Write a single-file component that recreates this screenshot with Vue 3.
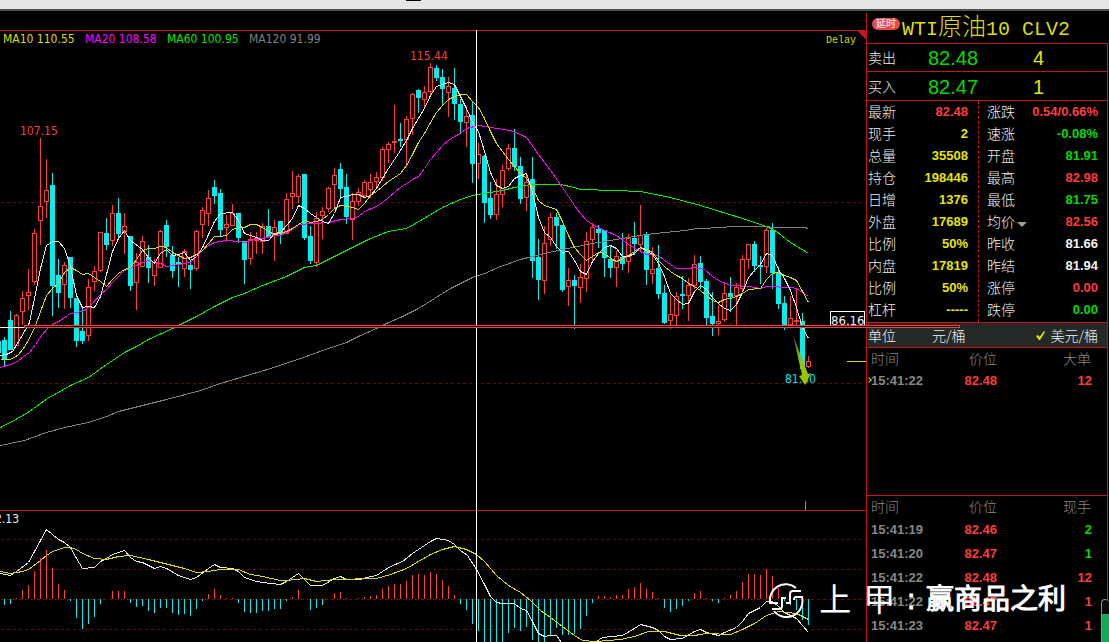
<script setup>
// [centre x, direction (u = up, d = down), high, body top, body bottom, low]
const candles = [
  [-2,'d',341,341,353,353],[4,'d',337,340,360,366],[10,'d',311,320,350,350],[16,'u',314,315,346,346],[22,'u',291,298,312,325],
  [28,'u',269,292,296,310],[34,'u',229,233,282,285],[40,'u',138,206,221,245],[46,'u',159,190,202,218],[52,'d',173,185,286,316],
  [58,'d',259,275,293,308],[64,'u',262,265,285,309],[70,'d',257,257,298,308],[76,'d',298,298,341,347],[82,'d',306,331,341,344],
  [88,'u',279,287,336,341],[94,'u',266,271,282,291],[100,'u',232,232,271,272],[106,'d',218,233,245,250],[112,'u',205,213,241,246],
  [118,'d',198,213,234,239],[124,'u',213,226,232,254],[130,'d',236,236,286,291],[136,'u',253,262,283,310],[142,'u',236,241,267,267],
  [148,'d',245,257,268,283],[154,'u',259,262,276,286],[160,'u',230,231,268,268],[166,'d',220,225,247,257],[172,'d',246,255,271,278],
  [178,'d',257,262,265,287],[184,'u',249,251,269,277],[190,'d',261,265,270,289],[196,'u',230,231,269,271],[202,'u',207,210,225,238],
  [208,'u',190,198,214,226],[214,'d',180,187,196,204],[220,'d',189,193,230,236],[226,'u',215,224,228,242],[232,'u',204,213,226,226],
  [238,'d',213,213,238,243],[244,'d',241,241,260,284],[250,'u',232,239,259,265],[256,'u',232,238,241,254],[262,'u',223,226,242,254],
  [268,'d',209,226,237,238],[274,'u',220,227,236,261],[280,'d',221,221,234,244],[286,'u',193,199,234,234],[292,'u',171,193,197,209],
  [298,'u',174,176,197,203],[304,'d',174,174,238,240],[310,'d',226,236,261,264],[316,'u',212,218,263,267],[322,'u',207,211,216,239],
  [328,'u',187,188,209,212],[334,'u',168,175,185,208],[340,'d',163,169,189,197],[346,'d',174,187,217,224],[352,'u',193,201,220,240],
  [358,'u',188,192,202,206],[364,'u',180,182,196,198],[370,'u',174,182,190,198],[376,'u',172,177,182,187],[382,'u',147,149,178,181],
  [388,'u',142,144,150,163],[394,'u',105,141,143,153],[400,'d',123,139,141,147],[406,'u',116,119,140,167],[412,'u',93,94,119,135],
  [418,'d',89,90,98,113],[424,'u',86,92,100,108],[430,'u',63,67,92,95],[436,'d',65,68,78,81],[442,'d',69,77,89,106],
  [448,'u',77,86,93,117],[454,'d',68,88,104,120],[460,'d',99,104,122,133],[466,'u',106,116,123,147],[472,'d',101,115,164,183],
  [478,'u',143,154,164,179],[484,'d',155,156,203,223],[490,'d',182,198,215,219],[496,'u',179,194,215,220],[502,'u',165,170,195,207],
  [508,'u',144,148,169,171],[514,'d',129,148,167,171],[520,'d',157,166,199,204],[526,'u',175,182,198,211],[532,'d',157,179,261,278],
  [538,'d',239,257,280,300],[544,'u',226,243,281,294],[550,'u',213,217,240,246],[556,'d',213,217,226,249],[562,'d',225,225,290,292],
  [568,'u',268,280,287,306],[574,'d',275,280,286,329],[580,'u',264,277,288,303],[586,'u',232,241,279,292],[592,'u',223,227,240,262],
  [598,'d',225,229,233,248],[604,'d',230,230,258,277],[610,'d',245,259,268,278],[616,'u',251,256,268,287],[622,'d',233,257,264,270],
  [628,'u',234,238,262,273],[634,'d',222,238,244,255],[640,'u',205,235,245,251],[646,'d',232,234,270,285],[652,'u',247,269,274,284],
  [658,'d',245,268,294,299],[664,'d',285,293,323,324],[670,'u',295,314,321,329],[676,'u',292,296,316,327],[682,'d',276,294,296,309],
  [688,'u',278,285,296,321],[694,'u',255,264,286,289],[700,'d',256,263,282,289],[706,'d',279,281,318,327],[712,'d',292,316,324,336],
  [718,'u',305,321,324,335],[724,'u',283,293,320,322],[730,'d',277,293,297,312],[736,'u',283,287,296,327],[742,'u',255,259,289,292],
  [748,'u',244,244,260,269],[754,'d',241,244,266,272],[760,'d',256,265,267,284],[766,'u',228,230,267,273],[772,'d',223,230,273,289],
  [778,'d',267,273,304,309],[784,'d',296,303,327,330],[790,'u',296,318,325,327],[796,'u',288,320,322,328],[802,'d',313,321,369,369],
  [808,'u',356,361,367,368]
]

const averages = [
  { cls: 'gray', points: '0,445 24,440 46,432 64,427 88,422 106,416 118,411 142,405 166,399 200,390 220,383 240,377 270,368 300,358 325,349 346,342 360,335 376,328 388,322 400,317 418,308 434,298 450,288 472,277 484,273 500,266 520,259 544,253 562,249 592,243 610,240 628,237 646,234 664,232 685,230 697,228 724,227 730,226 764,226 774,227 804,227 808,228' },
  { cls: 'green', points: '0,427 17,418 29,411 47,398 70,385 88,377 106,364 124,352 136,346 148,339 172,328 196,316 214,306 232,297 244,293 262,285 286,276 304,267 316,265 334,256 352,247 370,238 388,231 406,228 422,219 442,207 460,199 472,195 484,193 502,190 514,187 530,184 560,184 574,187 580,189 614,190 640,191 650,193 670,197 700,205 742,218 766,226 776,231 790,242 808,253' },
  { cls: 'magenta', points: '0,367 10,364 17,361 23,356 29,352 35,344 41,335 47,328 52,324 60,320 70,313 82,311 90,305 100,294 106,289 112,282 118,276 124,270 130,267 136,265 142,262 148,260 154,262 160,263 166,266 172,265 190,262 196,256 202,250 208,245 214,242 226,240 238,241 244,242 250,240 262,238 274,235 280,235 292,229 298,224 328,222 340,219 352,218 358,216 364,211 376,206 382,202 388,197 400,187 412,179 418,176 424,168 430,159 442,145 448,140 454,136 460,133 466,128 478,125 490,127 510,130 520,134 526,137 538,154 550,170 562,187 574,205 580,213 586,220 592,224 604,230 616,235 628,244 640,251 646,254 658,255 664,260 676,268 688,268 694,267 704,269 712,276 718,280 730,285 748,286 760,288 766,286 790,287 796,288 802,292 808,296' },
  { cls: 'yellow', points: '0,359 10,359 17,355 23,348 29,338 35,325 40,311 46,295 52,288 58,283 64,272 70,267 76,270 82,274 88,273 94,277 100,281 106,286 112,279 118,273 124,269 130,267 136,259 142,250 148,248 154,248 160,246 166,247 172,252 178,255 184,258 190,257 196,254 202,250 208,243 214,236 220,236 226,235 232,229 238,227 244,227 250,224 256,224 262,227 268,231 274,234 280,233 286,231 292,228 298,224 304,220 310,222 316,221 322,219 328,214 334,208 340,205 346,206 352,207 358,209 364,203 370,195 376,191 382,186 388,181 394,177 400,173 406,165 412,154 418,142 424,133 430,122 436,112 442,105 448,99 454,96 460,94 466,94 472,101 478,107 484,118 490,131 496,143 502,151 508,159 514,166 520,173 526,178 532,187 538,200 544,205 550,207 556,209 562,221 568,235 574,247 580,254 586,260 592,256 598,252 604,253 610,258 616,261 622,258 628,255 634,251 640,247 646,249 652,252 658,260 664,266 670,271 676,275 682,278 688,283 694,286 700,290 706,295 712,300 718,302 724,299 730,298 736,296 742,293 748,289 760,288 766,279 772,273 778,272 784,275 790,277 796,280 802,291 808,302' },
  { cls: 'white', points: '0,355 6,354 12,351 17,343 24,331 29,322 35,293 40,268 46,245 52,241 58,241 64,248 70,266 76,295 82,307 88,306 94,307 100,296 106,274 112,251 118,238 124,230 130,240 142,249 148,257 154,263 160,253 166,249 172,255 178,254 184,252 190,260 196,256 202,247 208,234 214,221 220,213 232,212 238,220 244,233 256,237 262,240 268,240 274,233 280,232 286,225 292,218 298,205 304,208 310,213 316,217 322,221 328,223 334,213 340,197 346,196 352,194 358,194 364,197 370,195 376,188 382,178 388,168 394,159 400,150 406,140 412,128 418,118 424,108 430,95 436,86 442,84 448,82 454,84 460,96 466,108 472,122 478,131 484,151 490,172 496,185 502,188 508,186 514,178 520,175 526,173 532,192 538,217 544,232 550,237 556,246 562,252 568,251 574,260 580,271 586,274 592,261 598,253 604,247 610,245 616,248 622,256 628,256 634,253 640,247 646,250 652,254 658,263 664,276 670,293 676,299 682,304 688,303 694,291 700,285 706,289 712,297 718,303 724,308 730,310 736,304 742,292 748,277 754,270 760,264 766,253 772,255 778,269 784,278 790,290 796,307 802,327 808,338' }
]

const macd = [
  { cls: 'white', points: '0,573 10,575 16,571 28,562 34,551 40,540 46,529 52,534 58,539 64,542 70,547 76,558 82,568 94,567 100,561 106,558 112,554 118,552 124,550 130,557 136,561 142,562 154,568 160,566 166,568 178,575 184,577 190,579 196,577 208,568 214,564 220,567 232,568 238,571 244,577 256,581 270,583 280,584 286,581 298,573 304,579 310,585 322,585 334,578 340,576 346,579 360,579 366,577 376,575 382,571 390,566 402,561 412,553 418,549 424,545 430,541 436,538 448,540 454,544 460,550 467,555 476,569 484,584 490,596 496,602 502,603 514,603 520,608 526,610 532,621 538,633 544,636 550,635 556,635 561,642 580,652 596,641 602,637 622,635 634,628 640,624 652,627 658,630 664,636 670,639 682,638 694,631 700,629 706,632 718,635 724,632 736,627 742,621 748,613 754,610 760,607 766,601 772,601 778,606 784,612 796,618 802,625 808,632' },
  { cls: 'yellow', points: '0,571 10,573 22,571 28,569 40,560 46,555 52,551 64,547 70,547 76,549 82,553 94,558 106,559 118,556 130,555 148,559 160,562 172,565 184,568 196,572 208,571 220,569 238,569 250,574 262,576 280,580 286,580 304,578 316,581 334,579 376,578 390,574 406,568 418,561 430,554 442,549 454,546 466,549 476,554 484,561 496,575 508,585 520,592 530,600 540,610 550,617 562,626 574,635 582,640 595,641 620,639 634,636 648,631 664,631 680,635 694,635 706,633 730,634 742,629 754,623 766,615 778,611 796,613 808,619' }
]

const zero = 599
// One bar every 6 px from x = 4; each value is the bar's end
const ends = [
  605,604,598,590,585,571,558,550,568,584,590,601,618,629,624,617,604,599,591,591,591,603,607,606,611,613,608,608,613,615,
  614,616,609,601,594,589,595,598,598,603,612,613,613,611,611,609,609,601,597,590,599,610,608,605,599,593,592,598,599,598,
  597,596,595,589,586,584,584,581,575,574,575,572,574,580,586,595,604,610,624,631,642,642,642,642,633,628,631,627,640,642,
  642,635,628,635,635,634,629,616,603,596,596,597,595,595,589,587,583,589,592,598,608,612,609,606,601,593,591,598,601,603,
  598,595,591,582,574,574,575,569,576,588,601,605,610,620,625
]
const bars = ends.map((end, i) => ({
  x: 4 + i * 6,
  y: Math.min(end, zero),
  h: Math.abs(end - zero),
  cls: end < zero ? 'up' : 'down'
}))

const legend = [
  { x: 3, text: 'MA10 110.55', cls: 'yellow' },
  { x: 85, text: 'MA20 108.58', cls: 'magenta' },
  { x: 167, text: 'MA60 100.95', cls: 'green' },
  { x: 249, text: 'MA120 91.99', cls: 'gray' }
]

const orders = [
  { label: '卖出', price: '82.48', count: '4' },
  { label: '买入', price: '82.47', count: '1' }
]

const leftStats = [
  ['最新', '82.48', 'r'], ['现手', '2', 'y'], ['总量', '35508', 'y'], ['持仓', '198446', 'y'], ['日增', '1376', 'y'],
  ['外盘', '17689', 'y'], ['比例', '50%', 'y'], ['内盘', '17819', 'y'], ['比例', '50%', 'y'], ['杠杆', '-----', 'y']
]
const rightStats = [
  ['涨跌', '0.54/0.66%', 'r'], ['速涨', '-0.08%', 'g'], ['开盘', '81.91', 'g'], ['最高', '82.98', 'r'], ['最低', '81.75', 'g'],
  ['均价', '82.56', 'r'], ['昨收', '81.66', 'w'], ['昨结', '81.94', 'w'], ['涨停', '0.00', 'r'], ['跌停', '0.00', 'g']
]

const trades = [
  ['15:41:19', '82.46', '2', 'g'],
  ['15:41:20', '82.47', '1', 'g'],
  ['15:41:22', '82.48', '12', 'r'],
  ['15:41:22', '82.47', '1', 'r'],
  ['15:41:23', '82.47', '1', 'r']
]
</script>

<template>
  <div class="app">
    <header class="topbar"><span class="mark"></span></header>
    <main class="main">
      <section class="chart">
        <svg class="plot" viewBox="0 11 866 631" role="img" aria-label="WTI原油10">
          <defs>
            <linearGradient id="tail" x1="0" y1="0" x2="0" y2="1">
              <stop offset="0" stop-color="#4c5c10" />
              <stop offset="0.5" stop-color="#98c400" />
            </linearGradient>
          </defs>

          <g class="crisp">
            <path class="grid" d="M1 202.5H866M1 383.5H866M1 539.5H866M1 569.5H866M1 599.5H866M1 629.5H866" />
            <path class="frame" d="M0 30.5H866M0 510.5H866" />
            <path d="M857 30H866V40Z" fill="#c81414" />
          </g>

          <g class="crisp">
            <g v-for="c in candles" :key="c[0]" :class="c[1] === 'u' ? 'rise' : 'fall'">
              <template v-if="c[1] === 'u'">
                <rect class="wick" :x="c[0]" :y="c[2]" width="1" :height="c[3] - c[2]" />
                <rect class="wick" :x="c[0]" :y="c[4]" width="1" :height="c[5] - c[4]" />
                <rect class="hollow" :x="c[0] - 1.5" :y="c[3] + 0.5" width="4" :height="c[4] - c[3] - 1" />
              </template>
              <template v-else>
                <rect class="wick" :x="c[0]" :y="c[2]" width="1" :height="c[5] - c[2]" />
                <rect class="wick" :x="c[0] - 2" :y="c[3]" width="5" :height="c[4] - c[3]" />
              </template>
            </g>
            <rect v-for="b in bars" :key="b.x" :class="b.cls" :x="b.x" :y="b.y" width="1" :height="b.h" />
          </g>

          <g class="crisp lines" transform="translate(0.5 0.5)">
            <polyline v-for="a in averages" :key="a.cls" :class="a.cls" :points="a.points" />
            <polyline v-for="m in macd" :key="m.cls" :class="m.cls" :points="m.points" />
          </g>

          <g class="crisp">
            <path d="M476.5 30V642M0 327.5H866" stroke="#fff" fill="none" />
            <path d="M847 361.5H866" stroke="#e0e000" />
            <path d="M805.5 501V510" stroke="#909090" />
            <rect x="830.5" y="311.5" width="34" height="16" fill="#000" stroke="#fff" />
          </g>

          <g class="t12">
            <text v-for="l in legend" :key="l.x" :class="l.cls" :x="l.x" y="43">{{ l.text }}</text>
            <text class="redtext" x="20" y="135">107.15</text>
            <text class="redtext" x="410" y="60">115.44</text>
            <text class="cyan" x="785" y="383">81.50</text>
            <text class="white" x="19" y="523" text-anchor="end">2.13</text>
          </g>
          <text class="t13 white" x="831" y="325">86.16</text>
          <text class="delay" x="826" y="43">Delay</text>
          <path d="M793 335L804 364L808 374L811 373L805 385L799 376L802 375Z" fill="url(#tail)" />
        </svg>
      </section>

      <aside class="panel">
        <h1 class="title">
          <span class="badge">延时</span>
          <span class="name">WTI<span class="han">原油</span>10 CLV2</span>
        </h1>
        <div class="box">
          <div v-for="o in orders" :key="o.label" class="order">
            <span>{{ o.label }}</span>
            <span class="price">{{ o.price }}</span>
            <span class="count">{{ o.count }}</span>
          </div>

          <div class="stats">
            <dl class="col left">
              <div v-for="(s, i) in leftStats" :key="i" class="stat">
                <dt>{{ s[0] }}</dt>
                <dd :class="s[2]">{{ s[1] }}</dd>
              </div>
            </dl>
            <dl class="col right">
              <div v-for="(s, i) in rightStats" :key="i" class="stat">
                <dt>
                  <button v-if="s[0] === '均价'" class="pick" type="button">{{ s[0] }}<i class="caret"></i></button>
                  <template v-else>{{ s[0] }}</template>
                </dt>
                <dd :class="s[2]">{{ s[1] }}</dd>
              </div>
            </dl>
          </div>

          <div class="units">
            <span>单位</span>
            <button class="unit first" type="button">元/桶</button>
            <button class="unit" type="button">
              <svg class="tick" viewBox="0 0 9 9"><path d="M0 5L2 4L3.500 6L8 0L9 1L4 9H3Z" fill="#e6e600" /></svg>美元/桶
            </button>
          </div>

          <table class="trades big">
            <thead><tr><th>时间</th><th>价位</th><th>大单</th></tr></thead>
            <tbody>
              <tr><td class="now">15:41:22</td><td class="r">82.48</td><td class="r">12</td></tr>
            </tbody>
          </table>

          <table class="trades ticks">
            <thead><tr><th>时间</th><th>价位</th><th>现手</th></tr></thead>
            <tbody>
              <tr v-for="(t, i) in trades" :key="i"><td>{{ t[0] }}</td><td class="r">{{ t[1] }}</td><td :class="t[3]">{{ t[2] }}</td></tr>
            </tbody>
          </table>
        </div>
      </aside>

      <div class="marker"></div>
      <div class="scroll"></div>
      <div class="watermark">
        <svg class="logo" viewBox="0 0 36 36">
          <g fill="none" stroke="#fff" stroke-width="2">
            <path d="M28 6A16 16 0 0 0 2 21H10" />
            <path d="M6 29A16 16 0 0 0 34 15H28Q26 15 26 18" />
            <path d="M33 9H25Q22 9 22 12V21H18" />
            <path d="M4 27H11Q14 27 14 24V16H18" />
          </g>
        </svg>
        <span class="brand">上</span><span class="brand">甲</span><span class="tag">:</span><span class="tag">赢商品之利</span>
      </div>
    </main>
  </div>
</template>

<style>
body {
  background: #000;
}
</style>

<style scoped>
.app {
  display: flex;
  flex-direction: column;
  min-height: 100vh;
  background: #000;
  color: #f0f0f0;
  font: 300 14px/22px "Liberation Sans", "Noto Sans CJK SC", sans-serif;
}
.topbar {
  height: 9px;
  background: #e6e6e6;
  border-bottom: 2px solid #505252;
}
.mark {
  display: block;
  width: 15px;
  height: 1px;
  margin-left: 406px;
  background: #000;
}
.main {
  position: relative;
  flex: 1;
  display: flex;
  overflow: hidden;
}
.chart {
  flex: 1;
  min-width: 0;
}
.plot {
  display: block;
  width: 100%;
}
.crisp {
  shape-rendering: crispEdges;
}
.grid {
  stroke: #800008;
  stroke-dasharray: 3 3;
}
.frame {
  stroke: #c81414;
}
.rise .wick, .up {
  fill: #ff3c3c;
}
.hollow {
  fill: #000;
  stroke: #ff3c3c;
}
.fall .wick, .down {
  fill: #00f0f0;
}
.lines polyline {
  fill: none;
}
.lines .white { stroke: #e8e8e8; }
.lines .yellow { stroke: #dcdc00; }
.lines .magenta { stroke: #ff00ff; }
.lines .green { stroke: #00f000; }
.lines .gray { stroke: #808080; }
text {
  font-weight: 400;
}
text.white { fill: #f0f0f0; }
text.yellow { fill: #dcdc00; }
text.magenta { fill: #ff00ff; }
text.green { fill: #00e600; }
text.gray { fill: #808080; }
text.redtext { fill: #f04040; }
text.cyan { fill: #00e6e6; }
.t12 {
  font: 12px "DejaVu Sans Condensed", "DejaVu Sans", sans-serif;
}
.t13 {
  font: 13px "DejaVu Sans Condensed", "DejaVu Sans", sans-serif;
}
.delay {
  font: 10px "Liberation Mono", monospace;
  fill: #dcdc00;
}

.panel {
  width: 242px;
  margin: 2px 1px 0 0;
  flex: none;
  display: flex;
  flex-direction: column;
  box-sizing: border-box;
  border-left: 1px solid #c81414;
}
.title {
  display: flex;
  align-items: center;
  gap: 2px;
  height: 30px;
  margin: 0;
  padding-left: 5px;
  font-weight: 400;
}
.badge {
  align-self: flex-start;
  margin-top: 5px;
  width: 28px;
  height: 12px;
  border-radius: 6px;
  background: #f04848;
  color: #fff;
  font-size: 10px;
  line-height: 12px;
  text-align: center;
}
.name {
  padding-top: 2px;
  color: #dcdc00;
  font: 300 20px/30px "Liberation Mono", "Noto Sans CJK SC", monospace;
  white-space: nowrap;
}
.han {
  font-size: 24px;
}
.box {
  flex: 1;
  border-top: 1px solid #c81414;
  border-right: 1px solid #c81414;
}
.order {
  display: grid;
  grid-template-columns: 60px 105px 1fr;
  align-items: center;
  height: 28px;
  padding: 1px 0 0 1px;
  box-sizing: border-box;
  border-bottom: 1px solid #c81414;
}
.order + .order {
  height: 29px;
  padding-top: 2px;
}
.price {
  color: #00dc00;
  font-size: 20px;
}
.count {
  color: #e6e600;
  font-size: 20px;
}
.price, .count {
  font-weight: 400;
}
.stats {
  display: flex;
  height: 221px;
  border-bottom: 1px solid #c81414;
}
.col {
  margin: 0;
}
.left {
  width: 100px;
  padding: 0 10px 0 1px;
  border-right: 1px dashed #c81414;
}
.right {
  flex: 1;
  padding: 0 9px 0 8px;
}
.stat {
  display: flex;
  justify-content: space-between;
  height: 22px;
}
dd {
  margin: 0;
  font-size: 13px;
  font-weight: 700;
}
.r { color: #ff3c3c; }
.g { color: #00dc00; }
.y { color: #e6e600; }
.w { color: #f4f4f4; }
button {
  padding: 0;
  border: 0;
  background: none;
  color: inherit;
  font: inherit;
}
.pick {
  display: flex;
  align-items: center;
  gap: 2px;
}
.caret {
  border: 5px solid transparent;
  border-top-color: #a0a0a0;
  border-bottom: 0;
  margin-top: 4px;
}
.units {
  display: flex;
  align-items: center;
  height: 24px;
  margin-left: 1px;
  padding-right: 9px;
  background: #252a26;
  border-bottom: 1px solid #c81414;
  font-family: "Noto Sans CJK SC", sans-serif;
}
.first {
  margin: 0 auto 0 36px;
}
.unit {
  display: flex;
  align-items: center;
  gap: 5px;
}
.tick {
  width: 9px;
  height: 9px;
}
.trades {
  width: 100%;
  border-collapse: collapse;
  table-layout: fixed;
  color: #888;
}
.big {
  height: 44px;
  margin-bottom: 103px;
}
.trades th {
  height: 22px;
  padding: 0;
  line-height: 22px;
  font-weight: 300;
}
.trades td {
  height: 24px;
  padding: 0;
  font-size: 13px;
  line-height: 24px;
  font-weight: 700;
}
.big td {
  height: 20px;
  line-height: 20px;
}
.trades th:nth-child(n), .trades td:nth-child(n) {
  text-align: right;
}
.trades th:first-child, .trades td:first-child {
  width: 80px;
  padding-left: 4px;
  text-align: left;
}
.trades th:nth-child(2), .trades td:nth-child(2) {
  width: 46px;
}
.trades td:last-child {
  padding-right: 15px;
}
.trades th:last-child {
  padding-right: 16px;
}
.ticks {
  border-top: 1px solid #c81414;
}
.now {
  position: relative;
}
.now::before {
  content: "";
  position: absolute;
  left: 0;
  top: 8px;
  width: 3px;
  height: 3px;
  border: solid #dcdc00;
  border-width: 1px 1px 0 0;
  transform: rotate(45deg);
}

.marker {
  position: absolute;
  top: 314px;
  left: 24px;
  right: 149px;
  height: 1px;
  border: 1px solid #ff3c3c;
  background: #000;
}
.scroll {
  position: absolute;
  right: 0;
  bottom: 0;
  width: 7px;
  height: 42px;
  border: 1px solid #8c8c8c;
  border-width: 1px 0 0 1px;
  border-radius: 4px 4px 0 0;
  background: linear-gradient(#0a0a0a 14px, #14aa58 14px);
}
.watermark {
  position: absolute;
  right: 43px;
  bottom: 22px;
  display: flex;
  align-items: center;
  height: 40px;
  color: #fff;
  font-weight: 400;
  white-space: nowrap;
}
.logo {
  width: 36px;
  height: 36px;
  margin-right: 15px;
}
.brand {
  width: 44px;
  font-size: 32px;
  line-height: 40px;
}
.tag {
  font-size: 28px;
  line-height: 40px;
  -webkit-text-stroke: 1px #fff;
}
.tag:last-child {
  margin-left: 11px;
}
</style>
